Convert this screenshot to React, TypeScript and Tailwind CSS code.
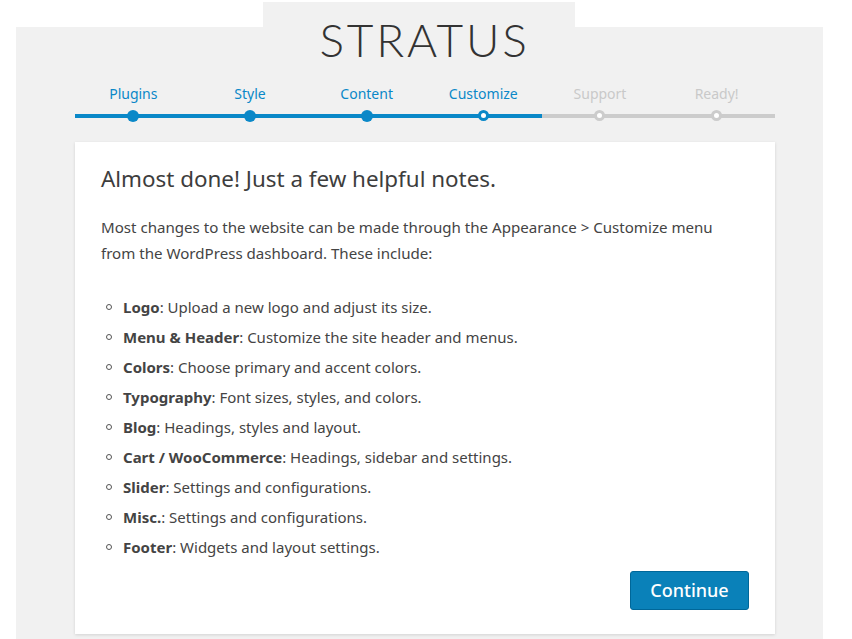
import React from 'react';

const steps = [
  { label: 'Plugins', state: 'done' },
  { label: 'Style', state: 'done' },
  { label: 'Content', state: 'done' },
  { label: 'Customize', state: 'active' },
  { label: 'Support', state: 'todo' },
  { label: 'Ready!', state: 'todo' },
];

const notes = [
  { title: 'Logo', text: 'Upload a new logo and adjust its size.' },
  { title: 'Menu & Header', text: 'Customize the site header and menus.' },
  { title: 'Colors', text: 'Choose primary and accent colors.' },
  { title: 'Typography', text: 'Font sizes, styles, and colors.' },
  { title: 'Blog', text: 'Headings, styles and layout.' },
  { title: 'Cart / WooCommerce', text: 'Headings, sidebar and settings.' },
  { title: 'Slider', text: 'Settings and configurations.' },
  { title: 'Misc.', text: 'Settings and configurations.' },
  { title: 'Footer', text: 'Widgets and layout settings.' },
];

const StepDot: React.FC<{ state: string }> = ({ state }) => {
  if (state === 'done') {
    return <span className="w-[12px] h-[12px] rounded-full bg-[#0a88c8]" />;
  }
  if (state === 'active') {
    return <span className="w-[11px] h-[11px] rounded-full bg-white border-[3px] border-[#0a88c8]" />;
  }
  return <span className="w-[11px] h-[11px] rounded-full bg-white border-[3px] border-[#cccccc]" />;
};

export default function App() {
  return (
    <div className="h-screen overflow-hidden bg-white flex flex-col pt-[2px]" style={{ fontFamily: '"Noto Sans", Roboto, sans-serif' }}>
      <div className="ml-[263px] w-[312px] h-[25px] bg-[#f1f1f1]" />
      <div className="ml-[16px] w-[807px] bg-[#f1f1f1] pl-[59px] pr-[48px] pb-[8px] min-h-[612px]">
        <h1
          className="-mt-[10px] -ml-[1px] text-center text-[46px] leading-none font-light tracking-[0.06em] text-[#333] h-[46px]"
          style={{ fontFamily: 'Lato, "Noto Sans", sans-serif' }}
        >
          STRATUS
        </h1>

        <ol className="grid grid-cols-6 mt-[21px]">
          {steps.map((s, i) => (
            <li key={s.label} className="flex flex-col items-center">
              <span
                className={`text-[14px] leading-[20px] ${s.state === 'todo' ? 'text-[#c9c9c9]' : 'text-[#0a88c8]'}`}
              >
                {s.label}
              </span>
              <div className="relative w-full h-[12px] mt-[6px] flex items-center justify-center">
                <div className={`absolute inset-x-0 h-[4px] ${i < 4 ? 'bg-[#0a88c8]' : 'bg-[#cccccc]'}`} />
                <span className="relative flex">
                  <StepDot state={s.state} />
                </span>
              </div>
            </li>
          ))}
        </ol>

        <div className="mt-[20px] bg-white shadow-[0_1px_3px_rgba(0,0,0,0.13)] pl-[26px] pr-[40px] pt-[21px] pb-[24px] text-[#444]">
          <h2 className="text-[22.4px] leading-[32px] text-[#3d3d3d]">Almost done! Just a few helpful notes.</h2>
          <p className="mt-[19px] text-[15.1px] leading-[26px]">
            Most changes to the website can be made through the Appearance &gt; Customize menu from the WordPress dashboard. These include:
          </p>
          <ul className="mt-[31px] flex flex-col gap-[10px]">
            {notes.map((n) => (
              <li key={n.title} className="flex items-center text-[15px] leading-[20px]">
                <span className="w-[6px] h-[6px] rounded-full border border-[#555] ml-[5px] mr-[11px]" />
                <span>
                  <strong className="font-bold">{n.title}</strong>: {n.text}
                </span>
              </li>
            ))}
          </ul>
          <div className="flex justify-end -mr-[14px] mt-[14px]">
            <button className="w-[119px] h-[39px] rounded-[3px] bg-[#0a81b9] border border-[#006799] text-white text-[18px] font-medium">
              Continue
            </button>
          </div>
        </div>
      </div>
    </div>
  );
}
